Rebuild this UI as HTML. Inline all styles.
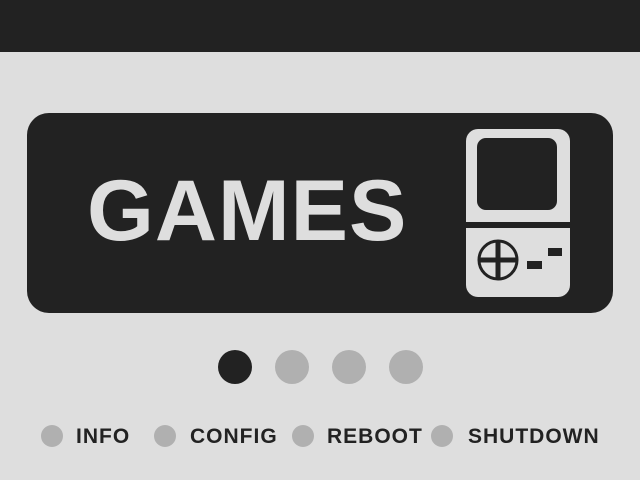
<!DOCTYPE html>
<html><head><style>
body{margin:0;width:640px;height:480px;background:#dedede;position:relative;overflow:hidden;font-family:"Liberation Sans",sans-serif}
.top{position:absolute;left:0;top:0;width:640px;height:52px;background:#222}
.card{position:absolute;left:27px;top:113px;width:586px;height:200px;background:#222;border-radius:22px}
.t{position:absolute;left:87px;top:161px;font-size:86px;font-weight:bold;color:#dedede;letter-spacing:1px;line-height:100px}
.d{position:absolute;width:34px;height:34px;border-radius:50%;background:#b0b0b0;top:350px}
.m{position:absolute;top:425px;font-size:21px;font-weight:bold;color:#222;line-height:24px;letter-spacing:1px}
.c{position:absolute;top:425px;width:22px;height:22px;border-radius:50%;background:#b0b0b0}
</style></head><body>
<div class="top"></div>
<div class="card"></div>
<div class="t">GAMES</div>
<svg style="position:absolute;left:0;top:0" width="640" height="480">
<path d="M466 222V141a12 12 0 0 1 12-12h80a12 12 0 0 1 12 12v81z" fill="#dedede"/>
<rect x="477" y="138" width="80" height="72" rx="9" fill="#222"/>
<path d="M466 228h104v57a12 12 0 0 1-12 12h-80a12 12 0 0 1-12-12z" fill="#dedede"/>
<circle cx="498" cy="260" r="19" fill="none" stroke="#222" stroke-width="3"/>
<path d="M498 241v38M479 260h38" stroke="#222" stroke-width="5"/>
<rect x="527" y="261" width="15" height="8" fill="#222"/>
<rect x="548" y="248" width="14" height="8" fill="#222"/>
</svg>
<div class="d" style="left:218px;background:#222"></div>
<div class="d" style="left:275px"></div>
<div class="d" style="left:332px"></div>
<div class="d" style="left:389px"></div>
<div class="c" style="left:41px"></div><div class="m" style="left:76px">INFO</div>
<div class="c" style="left:154px"></div><div class="m" style="left:190px">CONFIG</div>
<div class="c" style="left:292px"></div><div class="m" style="left:327px">REBOOT</div>
<div class="c" style="left:431px"></div><div class="m" style="left:468px">SHUTDOWN</div>
</body></html>
